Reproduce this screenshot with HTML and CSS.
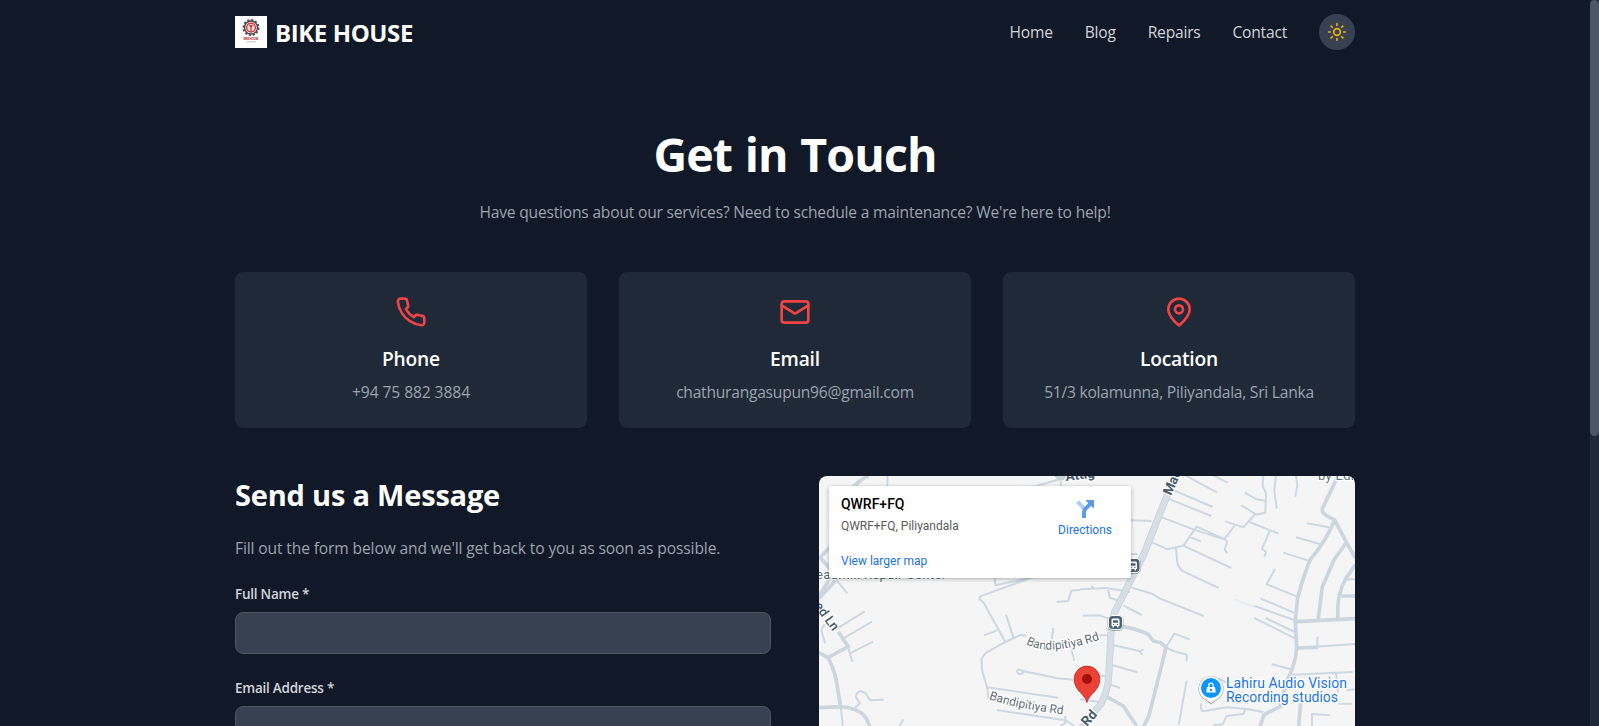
FILE: index.html
```html
<!DOCTYPE html>
<html lang="en">
<head>
<meta charset="utf-8">
<title>Bike House – Contact</title>
<link rel="stylesheet" href="styles.css">
</head>
<body>
<div class="page">
  <header class="header container">
    <a class="brand">
      <svg class="logo" viewBox="0 0 32 32">
        <rect width="32" height="32" fill="#fff"/>
        <circle cx="16" cy="11.600" r="7.600" fill="none" stroke="#4a4b4f" stroke-width="1.800" stroke-dasharray="2.100 1.880"/>
        <circle cx="16" cy="11.600" r="6.500" fill="none" stroke="#4a4b4f" stroke-width="1.500"/>
        <circle cx="16" cy="11.600" r="4.400" fill="#fbe3e4" stroke="#d8343c" stroke-width="1.400"/>
        <path d="M16 9v6.500M14.500 9.200l1.500 2 1.500-2" fill="none" stroke="#d8343c" stroke-width="1.300"/>
        <text class="logo-name" x="16" y="24.200" text-anchor="middle" textLength="15">BIKE HOUSE</text>
        <path d="M11.500 25.800h9.500" stroke="#aaa" stroke-width=".7"/>
      </svg>
      <span class="brand-name">BIKE HOUSE</span>
    </a>
    <nav class="nav">
      <a class="nav-link">Home</a>
      <a class="nav-link">Blog</a>
      <a class="nav-link">Repairs</a>
      <a class="nav-link">Contact</a>
      <button class="theme-toggle" aria-label="Toggle theme">
        <svg viewBox="0 0 24 24"><circle cx="12" cy="12" r="4"/><path d="M12 2v2M12 20v2M4.930 4.930l1.410 1.410M17.660 17.660l1.410 1.410M2 12h2M20 12h2M6.340 17.660l-1.410 1.410M19.070 4.930l-1.410 1.410"/></svg>
      </button>
    </nav>
  </header>

  <main class="container">
    <section class="hero">
      <h1 class="hero-title">Get in Touch</h1>
      <p class="hero-text muted">Have questions about our services? Need to schedule a maintenance? We're here to help!</p>
    </section>

    <section class="cards">
      <article class="card">
        <svg class="card-icon" viewBox="0 0 24 24"><path d="M22 16.920v3a2 2 0 0 1-2.180 2 19.790 19.790 0 0 1-8.630-3.070 19.500 19.500 0 0 1-6-6 19.790 19.790 0 0 1-3.070-8.670A2 2 0 0 1 4.110 2h3a2 2 0 0 1 2 1.720 12.840 12.840 0 0 0 .7 2.810 2 2 0 0 1-.45 2.110L8.090 9.910a16 16 0 0 0 6 6l1.270-1.270a2 2 0 0 1 2.110-.45 12.840 12.840 0 0 0 2.810.7A2 2 0 0 1 22 16.920z"/></svg>
        <h3 class="card-title">Phone</h3>
        <p class="muted phone-text">+94 75 882 3884</p>
      </article>
      <article class="card">
        <svg class="card-icon" viewBox="0 0 24 24"><rect x="2" y="4" width="20" height="16" rx="2"/><path d="M22 7l-8.970 5.700a1.940 1.940 0 0 1-2.060 0L2 7"/></svg>
        <h3 class="card-title">Email</h3>
        <p class="muted">chathurangasupun96@gmail.com</p>
      </article>
      <article class="card">
        <svg class="card-icon" viewBox="0 0 24 24"><path d="M20 10c0 6-8 12-8 12s-8-6-8-12a8 8 0 0 1 16 0z"/><circle cx="12" cy="10" r="3"/></svg>
        <h3 class="card-title">Location</h3>
        <p class="muted">51/3 kolamunna, Piliyandala, Sri Lanka</p>
      </article>
    </section>

    <section class="columns">
      <form class="form">
        <h2 class="form-title">Send us a Message</h2>
        <p class="form-text muted">Fill out the form below and we'll get back to you as soon as possible.</p>
        <div class="field">
          <label class="label" for="name">Full Name *</label>
          <input class="input" id="name" type="text">
        </div>
        <div class="field">
          <label class="label" for="email">Email Address *</label>
          <input class="input" id="email" type="email">
        </div>
      </form>

      <div class="map">
        <svg class="map-canvas" viewBox="0 0 536 250">
          <g transform="translate(-19 -16) scale(.33333)">
            <g class="road minor">
              <path d="M150 92L185 62M262 48v36M700 80L800 52M780 48l4 30M640 92l20-14"/>
              <path d="M108 358L142 400M108 508L194 454M132 534L216 485M150 580L219 545M74 492L64 510L75 550M144 560L157 605"/>
              <path d="M165 743L180 730L168 712Q168 696 182 694L196 698L210 721L251 719M122 740L129 800M310 778L298 800"/>
              <path d="M584 352l2 24L700 352M720 344L541 409L539 418L552 430L616 546M591 511L552 526M618 464L640 532M680 528L664 524L616 546L560 577Q542 594 545 604L546 630L562 685L565 716M562 682L774 713M591 750L796 781L824 798M796 768v20L780 800"/>
              <path d="M820 659L772 655L672 634Q650 624 651 636Q660 650 672 634M760 504L755 540M812 560L823 602M770 426L804 423L814 392L840 389"/>
            </g>
            <g class="road medium">
              <path d="M88 358L50 420M90 262L60 292L90 326M110 358L56 416M160 80Q180 58 206 48M115 515L145 560L84 592Q108 640 112 680L122 740M84 592L56 578M56 743L122 740Q180 746 198 774L210 800"/>
            </g>
            <path class="junction" d="M764 48h36l-8 12h-20z"/>
          </g>
          <g transform="translate(261 -16) scale(.33333)">
            <g class="road minor">
              <path d="M316 46L412 98M400 46L443 68M284 92L398 141M264 116L394 168M240 170L340 208L432 238M152 181L214 183M150 282H174M212 245L262 268L310 257L350 200L430 236Q446 242 438 256L434 270L442 280M328 230L362 244M436 184L490 202L524 164L556 158L558 100L548 78L550 46M494 98L530 118L554 122M484 136L526 162M432 238L464 198M508 186L596 221M570 212L546 266L558 276L553 290M588 46L583 90L590 146M648 46L652 76L646 110"/>
              <path d="M310 257L454 324M288 264L292 308Q296 326 310 334L416 384M154 382L218 402L240 416L371 468M0 388L80 384L150 396M34 378l8 8M84 390L90 414L112 420M130 436L185 465M8 467L58 466L86 476M54 526H84M100 556L182 574M190 568L180 574L186 584M98 616L173 637M92 674L120 684M58 648H78"/>
              <path d="M258 562L283 521L329 538M258 562L280 573L320 584V604M320 662L296 794M680 190L748 202M648 232L720 252M610 278L686 302M585 326L560 373L650 409M541 415L642 458M524 438L642 480M557 474L644 516M523 474L646 536M575 613L632 628"/>
              <path d="M650 564L826 552M712 530V560M636 644L818 636M768 640L774 698M800 691L824 688M415 655L440 668M776 731H816M696 798V762L749 766M400 796L428 793L440 768L490 762L496 748M550 756L496 746L440 742L370 754Q360 750 364 730M796 358H826M0 718L60 726"/>
              <path d="M463 417L496 432L526 440" opacity=".3"/>
            </g>
            <g class="road medium">
              <path d="M774 48L727 146Q724 156 738 166L764 180L800 248L826 294M764 180Q740 240 690 300Q662 372 652 420L646 484L650 560Q648 610 622 660L600 740L552 764L540 800M800 246L762 300L727 380L714 484M826 314L796 358Q768 410 774 476M650 485L826 476M784 408H826M650 564L714 562M662 730L656 800"/>
              <path d="M128 500Q160 504 204 522L220 543L242 548L258 562L236 652L206 770L190 800M80 710L130 738L170 798"/>
            </g>
            <path class="main-edge" d="M290 34L190 286L104 456Q92 500 92 540L86 650Q84 690 64 730L0 810"/>
            <path class="main" d="M290 34L190 286L104 456Q92 500 92 540L86 650Q84 690 64 730L0 810"/>
          </g>

          <path id="upper" d="M207 168Q229 181 283 163" fill="none"/>
          <path id="lower" d="M170 223Q198 233 250 239" fill="none"/>
          <g class="map-label">
            <text><textPath href="#upper" textLength="76">Bandipitiya Rd</textPath></text>
            <text><textPath href="#lower" textLength="76">Bandipitiya Rd</textPath></text>
            <text class="dark lane" transform="translate(-5 130) rotate(54)">ed Ln</text>
            <text class="dark bold" transform="translate(352 20) rotate(-66)">Madapatha</text>
            <text class="dark bold" transform="translate(268 251) rotate(-48)">Rd</text>
            <text class="dark bold" transform="translate(247 5) rotate(-7)">Attig</text>
            <text class="place" x="-3" y="103" textLength="130">eadmill Repair Center</text>
            <text class="place" x="499" y="4" textLength="36">by Edi</text>
          </g>

          <g id="stop" transform="translate(296.500 146.500)">
            <rect class="stop-shadow" x="-8" y="-7.500" width="16" height="16" rx="5"/>
            <rect x="-7.500" y="-7.500" width="15" height="15" rx="4.500" fill="#fff"/>
            <rect x="-6.500" y="-6.500" width="13" height="13" rx="3.500" fill="#49627a"/>
            <path d="M-4-2.500q0-1.500 1.500-1.500h5Q4-4 4-2.500v6H3V5H1.500V3.500h-3V5H-3V3.500h-1z" fill="#fff"/>
            <path d="M-2.500-2.300h5V.200h-5zM-2.500 1.500h1.200v1h-1.200zM1.300 1.500h1.200v1H1.300z" fill="#49627a"/>
          </g>
          <use href="#stop" x="17.500" y="-57"/>

          <path d="M268 226.500c-1.300-8-12.800-11.500-12.800-23.600a12.800 12.800 0 0 1 25.600 0c0 12.100-11.500 15.600-12.800 23.600z" fill="#ea4335" stroke="#c5221f" stroke-width=".8"/>
          <circle cx="268" cy="203" r="5" fill="#a50e0e"/>

          <g transform="translate(392 212)">
            <path class="pin-shadow" d="M0 16.500l-5-4a12.600 12.600 0 1 1 10 0z"/>
            <path d="M0 15l-5-3.500a12 12 0 1 1 10 0z" fill="#fff"/>
            <circle r="10" fill="#0b96ff"/>
            <path d="M-2.300-1v-1.500a2.300 2.300 0 0 1 4.600 0V-1" fill="none" stroke="#fff" stroke-width="1.300"/>
            <path d="M-4-1h8l.8 5.500h-9.600z" fill="#fff"/>
            <circle cy="2" r="1.200" fill="#0b96ff"/>
          </g>
          <g class="map-label studio">
            <text x="407" y="212" textLength="121">Lahiru Audio Vision</text>
            <text x="407" y="226" textLength="112">Recording studios</text>
          </g>
        </svg>

        <div class="info">
          <div class="info-place">
            <strong class="info-title">QWRF+FQ</strong>
            <span class="info-address">QWRF+FQ, Piliyandala</span>
            <a class="info-link">View larger map</a>
          </div>
          <a class="directions">
            <svg viewBox="0 0 18 18"><path d="M0 3L3 .500 9 6.500 7 10z" fill="#b0cdf5"/><path d="M6 18v-5.500Q6 9.500 8 7.500L12.200 3.300 9.500 0H18v8.500L15 6l-4 4q-1 1-1 2.500V18z" fill="#5d9be6"/></svg>
            <span>Directions</span>
          </a>
        </div>
      </div>
    </section>
  </main>
</div>
<div class="scroll-track"><div class="scroll-thumb"></div></div>
</body>
</html>
```

FILE: styles.css
```css
* { box-sizing: border-box; margin: 0; padding: 0; }

body {
  display: flex;
  height: 100vh;
  overflow: hidden;
  background: #111827;
  color: #fff;
  font-family: "Open Sans", "Noto Sans", sans-serif;
  font-size: 15.6px;
  line-height: 24px;
}

.page { flex: 1; height: 100vh; overflow: hidden; }
.container { width: 1120px; margin: 0 auto; }

.scroll-track { width: 9px; height: 100vh; background: #1f2937; }
.scroll-thumb { height: 436px; border-radius: 5px; background: #4b5563; }

.header { display: flex; align-items: center; justify-content: space-between; height: 64px; }
.brand { display: flex; align-items: center; gap: 8px; }
.logo { width: 32px; height: 32px; }
.logo-name { font: bold 3px "Liberation Sans", sans-serif; fill: #c4343b; }
.brand-name { font-size: 24px; font-weight: 700; line-height: 32px; letter-spacing: -0.4px; padding-top: 1px; }
.nav { display: flex; align-items: center; gap: 32px; color: #d1d5db; letter-spacing: -0.22px; }
.nav-link { margin-top: -1px; white-space: nowrap; }
.theme-toggle {
  display: flex; align-items: center; justify-content: center;
  width: 36px; height: 36px; border: 0; border-radius: 50%;
  background: #374151; margin-bottom: 1px;
}
.theme-toggle svg { width: 20px; height: 20px; fill: none; stroke: #eab308; stroke-width: 2; stroke-linecap: round; }

.muted { color: #9ca3af; letter-spacing: -0.24px; }

.hero { padding-top: 64px; text-align: center; }
.hero-title { font-size: 46.5px; line-height: 48px; font-weight: 700; padding-top: 2px; height: 56px; letter-spacing: -0.9px; word-spacing: 1.5px; }
.hero-text { margin-top: 16px; letter-spacing: -0.2px; }

.cards { display: grid; grid-template-columns: repeat(3, 1fr); gap: 32px; margin-top: 48px; }
.card {
  display: flex; flex-direction: column; align-items: center;
  height: 156px; padding: 24px; border-radius: 8px; background: #1f2937;
}
.card-icon { width: 32px; height: 32px; fill: none; stroke: #ef4444; stroke-width: 2; stroke-linejoin: round; stroke-linecap: round; }
.card-title { margin: 17px 0 7px; font-size: 19.2px; font-weight: 600; line-height: 28px; letter-spacing: -0.2px; }
.card p { white-space: nowrap; }
.card .phone-text { letter-spacing: -0.08px; }

.columns { display: grid; grid-template-columns: 1fr 1fr; gap: 48px; margin-top: 48px; }
.form-title { font-size: 29px; line-height: 36px; font-weight: 700; padding-top: 1px; letter-spacing: -0.2px; }
.form-text { margin-top: 23px; margin-bottom: 24px; white-space: nowrap; letter-spacing: -0.13px; }
.field { margin-bottom: 24px; }
.label { display: block; margin-bottom: 8px; color: #d1d5db; font-size: 13.5px; font-weight: 600; line-height: 20px; letter-spacing: -0.24px; }
.input { display: block; width: 100%; height: 42px; border: 1px solid #4b5563; border-radius: 8px; background: #374151; }

.map {
  position: relative; height: 400px; overflow: hidden;
  border-radius: 8px; background: #f5f5f5;
  font-family: Roboto, sans-serif;
}
.map-canvas { display: block; width: 536px; height: 250px; }
.road path { fill: none; stroke: #cdd8e2; stroke-linejoin: round; }
.minor path { stroke-width: 6; }
.medium path { stroke-width: 11; stroke: #ccd6df; }
.junction { fill: #c5d1dc; }
.main-edge { fill: none; stroke: #c4cfd9; stroke-width: 21; }
.main { fill: none; stroke: #d6dfe6; stroke-width: 17; }
.map-label text { font-size: 12px; fill: #5f6c75; stroke: #fff; stroke-width: 2.5px; stroke-linejoin: round; paint-order: stroke; }
.map-label .dark { fill: #45596b; font-weight: 500; }
.map-label .lane { font-size: 13px; }
.map-label .bold { font-size: 13.5px; font-weight: 700; }
.map-label .place { fill: #58717a; font-size: 13px; }
.map-label.studio text { fill: #1a73e8; font-size: 14px; }
.stop-shadow, .pin-shadow { fill: #000; opacity: .3; }

.info {
  position: absolute; left: 10px; top: 10px; width: 302px; height: 92px;
  display: flex; justify-content: space-between;
  padding: 10px 19px 8px 12px; border-radius: 2px;
  background: #fff; box-shadow: 0 1px 4px rgba(0, 0, 0, .3);
  font-size: 12px; line-height: 16px;
}
.info-place { display: flex; flex-direction: column; }
.info-title { color: #000; font-size: 14px; font-weight: 500; }
.info-address { margin-top: 6px; color: #5b5b5b; }
.info-link { margin-top: 19px; color: #1a73e8; }
.directions { display: flex; flex-direction: column; align-items: center; gap: 4px; padding-top: 4px; color: #1a73e8; }
.directions svg { width: 18px; height: 18px; }
```
